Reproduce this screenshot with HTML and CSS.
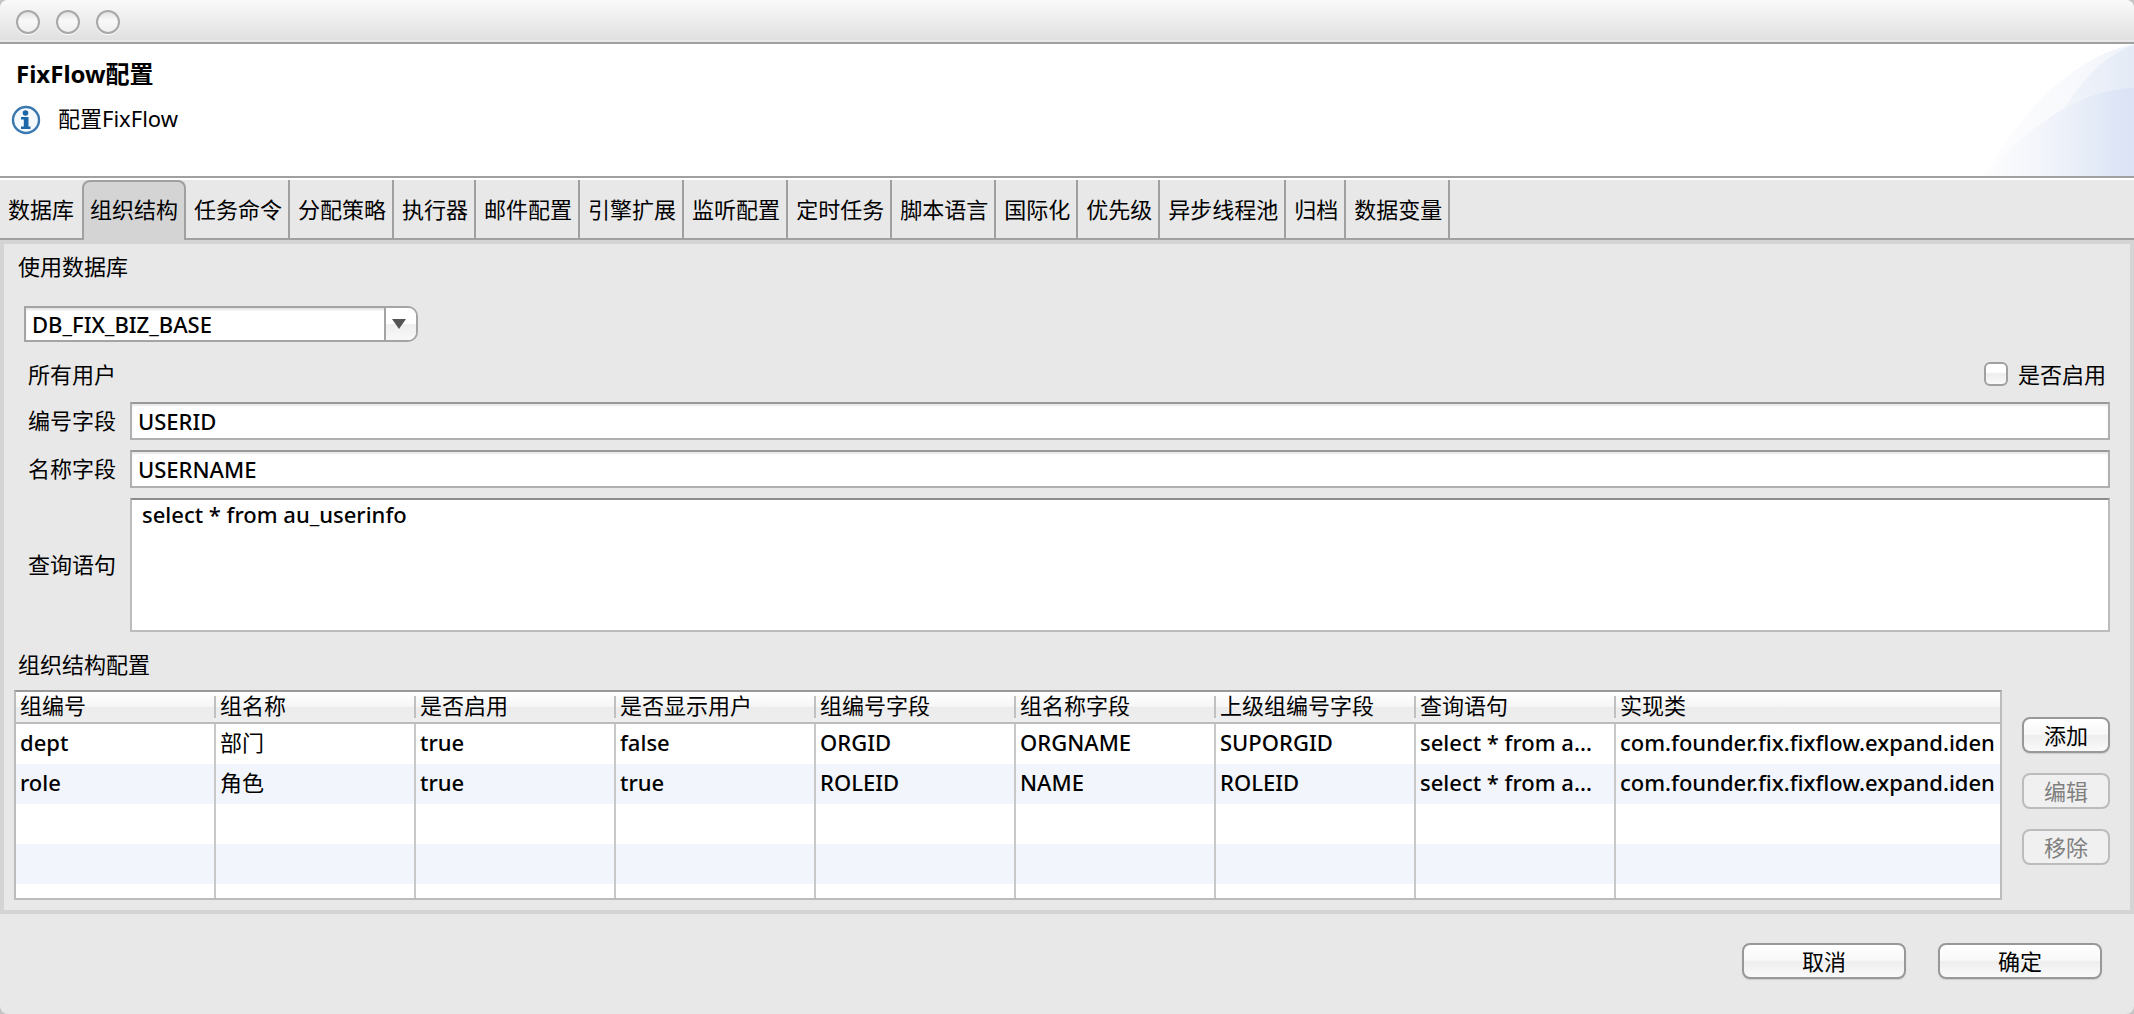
FILE: index.html
```html
<!DOCTYPE html>
<html lang="zh-CN">
<head>
<meta charset="utf-8">
<title>FixFlow配置</title>
<link rel="stylesheet" href="styles.css">
</head>
<body>
<div class="window">
  <div class="titlebar">
    <button class="light" aria-label="关闭"></button>
    <button class="light" aria-label="最小化"></button>
    <button class="light" aria-label="缩放"></button>
  </div>

  <header class="banner">
    <div class="banner-text">
      <h1 class="banner-title">FixFlow配置</h1>
      <p class="banner-message">
        <svg class="info" viewBox="0 0 30 30" aria-hidden="true">
          <circle cx="15" cy="15" r="13" fill="#f4f9fd" stroke="#3a79b0" stroke-width="2.400"/>
          <circle cx="14.500" cy="8" r="2.800" fill="#1c67a8"/>
          <path d="M10 12h7.500v9.500h2V24h-9.500v-2.500h2.800v-7H10z" fill="#1c67a8"/>
        </svg>
        <span class="banner-note">配置FixFlow</span>
      </p>
    </div>
    <svg class="swoosh" viewBox="0 0 150 132" aria-hidden="true">
      <defs>
        <linearGradient id="outer" x1="0" x2="1" y1="0" y2="0">
          <stop offset="0" stop-color="#fdfdfe"/>
          <stop offset="0.600" stop-color="#f8f9fc"/>
          <stop offset="1" stop-color="#eef2fa"/>
        </linearGradient>
        <linearGradient id="middle" gradientUnits="userSpaceOnUse" x1="50" x2="150" y1="0" y2="0">
          <stop offset="0" stop-color="#f7f8fc"/>
          <stop offset="1" stop-color="#e4ebf6"/>
        </linearGradient>
        <linearGradient id="inner" gradientUnits="userSpaceOnUse" x1="0" x2="150" y1="0" y2="0">
          <stop offset="0" stop-color="#fdfdfe"/>
          <stop offset="0.380" stop-color="#f3f5fb"/>
          <stop offset="0.700" stop-color="#e6ecf7"/>
          <stop offset="0.920" stop-color="#dce4f6"/>
          <stop offset="1" stop-color="#dce3f6"/>
        </linearGradient>
      </defs>
      <path d="M0 132C33 75 82 15 150 0V132z" fill="url(#outer)"/>
      <path d="M48 132C67 80 100 18 150 1V132z" fill="url(#middle)"/>
      <path d="M3 132C38 88 92 45 150 44V132z" fill="url(#inner)"/>
    </svg>
  </header>

  <nav class="tabs" role="tablist">
    <button class="tab tab-first" role="tab">数据库</button>
    <button class="tab tab-active" role="tab" aria-selected="true">组织结构</button>
    <button class="tab" role="tab">任务命令</button>
    <button class="tab" role="tab">分配策略</button>
    <button class="tab" role="tab">执行器</button>
    <button class="tab" role="tab">邮件配置</button>
    <button class="tab" role="tab">引擎扩展</button>
    <button class="tab" role="tab">监听配置</button>
    <button class="tab" role="tab">定时任务</button>
    <button class="tab" role="tab">脚本语言</button>
    <button class="tab" role="tab">国际化</button>
    <button class="tab" role="tab">优先级</button>
    <button class="tab" role="tab">异步线程池</button>
    <button class="tab" role="tab">归档</button>
    <button class="tab" role="tab">数据变量</button>
  </nav>

  <main class="panel">
    <label class="section-label" for="database">使用数据库</label>
    <div class="combo">
      <select id="database" class="combo-select"><option>DB_FIX_BIZ_BASE</option></select>
      <span class="combo-button" aria-hidden="true">
        <svg class="combo-arrow" viewBox="0 0 14 10"><path d="M0 0h14L7 10z" fill="#555"/></svg>
      </span>
    </div>

    <div class="form">
      <div class="users-row">
        <span>所有用户</span>
        <label class="enable"><input class="check" type="checkbox">是否启用</label>
      </div>
      <div class="field">
        <label class="field-label" for="user-id">编号字段</label>
        <input class="text-box" id="user-id" type="text" value="USERID">
      </div>
      <div class="field">
        <label class="field-label" for="user-name">名称字段</label>
        <input class="text-box" id="user-name" type="text" value="USERNAME">
      </div>
      <div class="field">
        <label class="field-label" for="query">查询语句</label>
        <textarea class="text-box query" id="query">select * from au_userinfo</textarea>
      </div>
    </div>

    <h2 class="section-label">组织结构配置</h2>
    <div class="groups">
      <div class="table-frame">
        <table class="table">
          <colgroup>
            <col class="col"><col class="col"><col class="col"><col class="col">
            <col class="col"><col class="col"><col class="col"><col class="col"><col>
          </colgroup>
          <thead>
            <tr>
              <th><span class="head">组编号</span></th><th><span class="head">组名称</span></th>
              <th><span class="head">是否启用</span></th><th><span class="head">是否显示用户</span></th>
              <th><span class="head">组编号字段</span></th><th><span class="head">组名称字段</span></th>
              <th><span class="head">上级组编号字段</span></th><th><span class="head">查询语句</span></th>
              <th><span class="head">实现类</span></th>
            </tr>
          </thead>
          <tbody>
            <tr><td>dept</td><td class="name">部门</td><td>true</td><td>false</td><td>ORGID</td><td>ORGNAME</td><td>SUPORGID</td><td>select * from a...</td><td>com.founder.fix.fixflow.expand.iden</td></tr>
            <tr><td>role</td><td class="name">角色</td><td>true</td><td>true</td><td>ROLEID</td><td>NAME</td><td>ROLEID</td><td>select * from a...</td><td>com.founder.fix.fixflow.expand.iden</td></tr>
            <tr><td></td><td></td><td></td><td></td><td></td><td></td><td></td><td></td><td></td></tr>
            <tr><td></td><td></td><td></td><td></td><td></td><td></td><td></td><td></td><td></td></tr>
            <tr><td></td><td></td><td></td><td></td><td></td><td></td><td></td><td></td><td></td></tr>
          </tbody>
        </table>
      </div>
      <div class="actions">
        <button class="button">添加</button>
        <button class="button" disabled>编辑</button>
        <button class="button" disabled>移除</button>
      </div>
    </div>
  </main>

  <footer class="footer">
    <button class="button button-wide">取消</button>
    <button class="button button-wide">确定</button>
  </footer>
</div>
</body>
</html>
```
FILE: styles.css
```css
* {
  box-sizing: border-box;
}

body {
  margin: 0;
  background: #c4c4c4;
  color: #000;
  font: 22px/32px "Noto Sans", "Noto Sans CJK SC", sans-serif;
}

button,
input,
select,
textarea {
  margin: 0;
  color: inherit;
  font: inherit;
}

.window {
  display: flex;
  flex-direction: column;
  min-height: 100vh;
  overflow: hidden;
  border-radius: 8px;
  background: #e8e8e8;
}

/* Title bar */
.titlebar {
  display: flex;
  align-items: center;
  gap: 16px;
  height: 44px;
  padding: 2px 0 0 16px;
  border-bottom: 2px solid #a0a0a0;
  background: linear-gradient(#fafafa, #e0e0e0 95%, #e8e8e8 96%);
}

.light {
  width: 24px;
  height: 24px;
  padding: 0;
  border: 2px solid #a8a8a8;
  border-radius: 50%;
  background: linear-gradient(#e2e2e2, #f8f8f8 40%, #f0f0f0);
  box-shadow: 0 1px 0 #fff;
}

/* Banner */
.banner {
  display: flex;
  justify-content: space-between;
  height: 136px;
  border-bottom: 2px solid #fff;
  background: #fff;
  box-shadow: inset 0 -2px #a0a0a0;
}

.banner-text {
  padding: 14px 0 0 11px;
}

.banner-title {
  margin: 0;
  padding-left: 5px;
  font-size: 24px;
  line-height: 32px;
}

.banner-message {
  display: flex;
  align-items: center;
  gap: 17px;
  margin: 12px 0 0;
}

.banner-note {
  padding-bottom: 4px;
}

.info {
  width: 30px;
  height: 30px;
}

.swoosh {
  width: 150px;
  height: 132px;
}

/* Tabs */
.tabs {
  display: flex;
  height: 60px;
  box-shadow: inset 0 -2px #a0a0a0;
}

.tab {
  padding: 0 6px 2px 8px;
  border: 0;
  border-right: 2px solid #a0a0a0;
  background: none;
  white-space: nowrap;
}

.tab-first {
  padding: 0 8px 2px;
  border-right: 0;
}

.tab-active {
  padding: 0 6px 4px;
  border: 2px solid #a0a0a0;
  border-bottom: 0;
  border-radius: 8px 8px 0 0;
  background: #d4d4d4;
}

/* Tab content */
.panel {
  padding: 6px 20px 10px 10px;
  border: 4px solid #d4d4d4;
}

.section-label {
  display: block;
  margin: 0;
  padding-left: 4px;
  font-size: 22px;
  font-weight: 400;
  line-height: 32px;
}

.combo {
  position: relative;
  width: 394px;
  margin: 24px 0 16px 10px;
}

.combo-select {
  display: block;
  width: 100%;
  height: 36px;
  padding: 0 40px 2px 6px;
  border: 2px solid #a4a4a4;
  border-radius: 0 10px 10px 0;
  appearance: none;
  background: #fff;
  box-shadow: inset 0 2px 2px #e4e4e4;
  font-weight: 500;
}

.combo-button {
  position: absolute;
  inset: 2px 2px 2px auto;
  display: flex;
  align-items: center;
  justify-content: center;
  width: 32px;
  padding-right: 4px;
  border-left: 2px solid #a4a4a4;
  border-radius: 0 8px 8px 0;
  background: linear-gradient(#fff 50%, #efefef 51%, #f8f8f8);
  pointer-events: none;
}

.combo-arrow {
  width: 14px;
  height: 10px;
}

.form {
  display: flex;
  flex-direction: column;
  gap: 10px;
  padding-left: 14px;
}

.users-row {
  display: flex;
  justify-content: space-between;
  padding: 0 4px 2px 0;
}

.enable {
  display: flex;
  align-items: center;
  gap: 10px;
}

.check {
  width: 24px;
  height: 24px;
  border: 2px solid #a0a0a0;
  border-radius: 6px;
  appearance: none;
  background: linear-gradient(#fff 40%, #ededed 50%, #fafafa);
}

.field {
  display: grid;
  grid-template-columns: 88px 1fr;
  gap: 14px;
  align-items: center;
}

.field-label {
  padding-bottom: 2px;
}

.text-box {
  width: 100%;
  height: 38px;
  padding: 0 6px;
  border: 2px solid #b0b0b0;
  border-top-color: #999;
  border-radius: 0;
  background: #fff;
  box-shadow: inset 0 2px 2px #e8e8e8;
  font-weight: 500;
}

.query {
  display: block;
  height: 134px;
  padding: 0 10px;
  border-color: #8c8c8c #bcbcbc #bcbcbc;
  line-height: 28px;
  resize: none;
  box-shadow: none;
}

h2.section-label {
  margin: 16px 0 10px;
}

/* Group table */
.groups {
  display: flex;
  gap: 20px;
}

.table-frame {
  flex: 1;
  min-width: 0;
  height: 210px;
  overflow: hidden;
  border: 2px solid #bcbcbc;
  border-top-color: #999;
  background: #fff;
}

.table {
  width: 100%;
  border-collapse: separate;
  border-spacing: 0;
  table-layout: fixed;
}

.col {
  width: 200px;
}

.table th {
  height: 32px;
  padding: 0;
  border-bottom: 2px solid #bcbcbc;
  background: linear-gradient(#fff, #f6f6f6 48%, #ececec 50%, #eee);
  font-weight: 400;
  text-align: left;
}

.head {
  display: block;
  height: 22px;
  padding-left: 4px;
  border-right: 2px solid #c0c0c0;
  line-height: 18px;
}

.table td {
  height: 40px;
  padding: 0 0 4px 4px;
  overflow: hidden;
  border-right: 2px solid #c8c8c8;
  font-weight: 500;
  white-space: nowrap;
}

.table .name {
  font-weight: 400;
}

.table th:last-child .head,
.table td:last-child {
  border-right: 0;
}

.table tbody tr:nth-child(even) {
  background: #f2f5fb;
}

.actions {
  display: flex;
  flex-direction: column;
  gap: 20px;
  padding-top: 27px;
}

.button {
  width: 88px;
  height: 36px;
  padding: 0;
  border: 2px solid #989898;
  border-radius: 8px;
  background: linear-gradient(#fff, #f8f8f8 48%, #eee 52%, #fafafa);
  box-shadow: 0 1px 1px #ccc;
  line-height: 30px;
}

.button:disabled {
  border-color: #bcbcbc;
  background: #f0f0f0;
  color: #808080;
  box-shadow: none;
}

/* Dialog buttons */
.footer {
  display: flex;
  justify-content: flex-end;
  gap: 32px;
  padding: 29px 32px 34px;
}

.button-wide {
  width: 164px;
}
```
